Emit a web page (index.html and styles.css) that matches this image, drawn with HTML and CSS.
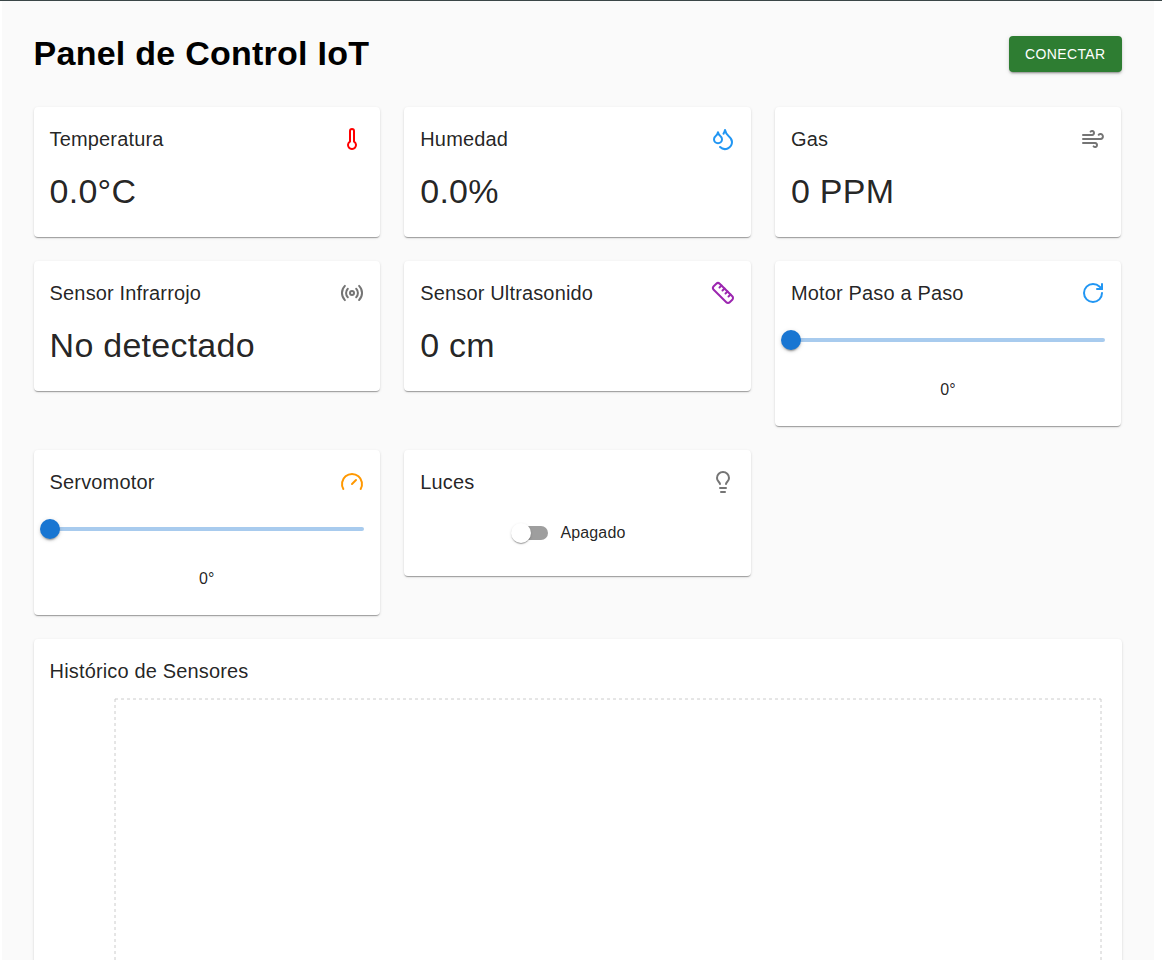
FILE: index.html
```html
<!DOCTYPE html>
<html lang="es">
<head>
<meta charset="utf-8">
<title>Panel de Control IoT</title>
<link rel="stylesheet" href="styles.css">
</head>
<body>
<main class="page">
  <header class="topbar">
    <h1 class="page-title">Panel de Control IoT</h1>
    <button class="connect" type="button">Conectar</button>
  </header>

  <section class="grid">
    <article class="card">
      <div class="card-head"><h2 class="card-title">Temperatura</h2>
        <svg class="icon icon-red" viewBox="0 0 24 24"><path d="M14 4v10.54a4 4 0 1 1-4 0V4a2 2 0 0 1 4 0Z"/></svg></div>
      <p class="value">0.0°C</p>
    </article>
    <article class="card">
      <div class="card-head"><h2 class="card-title">Humedad</h2>
        <svg class="icon icon-blue" viewBox="0 0 24 24"><path d="M7 16.3c2.2 0 4-1.83 4-4.05 0-1.16-.57-2.26-1.71-3.19S7.29 6.75 7 5.3c-.29 1.45-1.14 2.84-2.29 3.76S3 11.1 3 12.25c0 2.22 1.8 4.05 4 4.05z"/><path d="M12.56 6.6A10.97 10.97 0 0 0 14 3.02c.5 2.5 2 4.9 4 6.5s3 3.5 3 5.5a6.98 6.98 0 0 1-11.91 4.97"/></svg></div>
      <p class="value">0.0%</p>
    </article>
    <article class="card">
      <div class="card-head"><h2 class="card-title">Gas</h2>
        <svg class="icon icon-grey" viewBox="0 0 24 24"><path d="M17.7 7.7a2.5 2.5 0 1 1 1.8 4.3H2"/><path d="M9.6 4.6A2 2 0 1 1 11 8H2"/><path d="M12.6 19.4A2 2 0 1 0 14 16H2"/></svg></div>
      <p class="value">0 PPM</p>
    </article>

    <article class="card">
      <div class="card-head"><h2 class="card-title">Sensor Infrarrojo</h2>
        <svg class="icon icon-grey" viewBox="0 0 24 24"><path d="M4.9 19.1C1 15.2 1 8.8 4.9 4.9"/><path d="M7.8 16.2c-2.3-2.3-2.3-6.1 0-8.5"/><circle cx="12" cy="12" r="2"/><path d="M16.2 7.8c2.3 2.3 2.3 6.1 0 8.5"/><path d="M19.1 4.9C23 8.8 23 15.1 19.1 19"/></svg></div>
      <p class="value">No detectado</p>
    </article>
    <article class="card">
      <div class="card-head"><h2 class="card-title">Sensor Ultrasonido</h2>
        <svg class="icon icon-purple" viewBox="0 0 24 24"><path d="M21.3 15.3a2.4 2.4 0 0 1 0 3.4l-2.6 2.6a2.4 2.4 0 0 1-3.4 0L2.7 8.7a2.41 2.41 0 0 1 0-3.4l2.6-2.6a2.41 2.41 0 0 1 3.4 0Z"/><path d="m14.5 12.5 2-2"/><path d="m11.5 9.5 2-2"/><path d="m8.5 6.5 2-2"/><path d="m17.5 15.5 2-2"/></svg></div>
      <p class="value">0 cm</p>
    </article>
    <article class="card">
      <div class="card-head"><h2 class="card-title">Motor Paso a Paso</h2>
        <svg class="icon icon-blue" viewBox="0 0 24 24"><path d="M21 12a9 9 0 1 1-9-9c2.52 0 4.93 1 6.74 2.74L21 8"/><path d="M21 3v5h-5"/></svg></div>
      <div class="slider"><span class="slider-track"></span><span class="slider-thumb"></span></div>
      <p class="reading">0°</p>
    </article>

    <article class="card">
      <div class="card-head"><h2 class="card-title">Servomotor</h2>
        <svg class="icon icon-orange" viewBox="0 0 24 24"><path d="m12 14 4-4"/><path d="M3.34 19a10 10 0 1 1 17.32 0"/></svg></div>
      <div class="slider"><span class="slider-track"></span><span class="slider-thumb"></span></div>
      <p class="reading">0°</p>
    </article>
    <article class="card">
      <div class="card-head"><h2 class="card-title">Luces</h2>
        <svg class="icon icon-grey" viewBox="0 0 24 24"><path d="M15 14c.2-1 .7-1.7 1.5-2.5 1-.9 1.5-2.2 1.5-3.5A6 6 0 0 0 6 8c0 1 .2 2.2 1.5 3.5.7.7 1.3 1.5 1.5 2.5"/><path d="M9 18h6"/><path d="M10 22h4"/></svg></div>
      <div class="toggle-row">
        <label class="toggle"><span class="switch"><span class="switch-track"></span><span class="switch-thumb"></span></span><span class="toggle-label">Apagado</span></label>
      </div>
    </article>
  </section>

  <section class="card history">
    <h2 class="card-title history-title">Histórico de Sensores</h2>
    <svg class="chart" viewBox="0 0 1056 400" width="1056" height="400">
      <g class="chart-grid">
        <line x1="65" y1="5" x2="1051" y2="5"/>
        <line x1="65" y1="5" x2="65" y2="365"/>
        <line x1="1051" y1="5" x2="1051" y2="365"/>
        <line x1="65" y1="365" x2="1051" y2="365"/>
      </g>
    </svg>
  </section>
</main>
</body>
</html>
```
FILE: styles.css
```css
* { box-sizing: border-box; }

html, body {
  margin: 0;
  background: #fff;
}

body {
  height: 960px;
  overflow: hidden;
  border-top: 1px solid #3a4647;
  font-family: "Liberation Sans", Arial, sans-serif;
  color: rgba(0, 0, 0, .87);
}

.page {
  margin: 0 8.4px 0 1.6px;
  padding: 32px;
  background: #fafafa;
}

.topbar {
  display: flex;
  align-items: center;
  justify-content: space-between;
  margin-bottom: 32px;
}

.page-title {
  margin: 0;
  font-size: 34px;
  line-height: 41.99px;
  font-weight: 700;
  letter-spacing: .25px;
  color: #000;
}

.connect {
  height: 36px;
  padding: 6px 16px;
  border: 0;
  border-radius: 4px;
  background: #2e7d32;
  color: #fff;
  font: 400 14px/24.5px "Liberation Sans", Arial, sans-serif;
  letter-spacing: .4px;
  text-transform: uppercase;
  box-shadow: 0 3px 1px -2px rgba(0,0,0,.2), 0 2px 2px 0 rgba(0,0,0,.14), 0 1px 5px 0 rgba(0,0,0,.12);
}

.grid {
  display: grid;
  grid-template-columns: repeat(3, 1fr);
  gap: 24px;
  align-items: start;
  margin-bottom: 24px;
}

.grid .card {
  margin-right: .3px;
}

.card {
  padding: 16px 16px 24px;
  border-radius: 4px;
  background: #fff;
  box-shadow: 0 2px 1px -1px rgba(0,0,0,.2), 0 1px 1px 0 rgba(0,0,0,.14), 0 1px 3px 0 rgba(0,0,0,.12);
}

.card-head {
  display: flex;
  align-items: center;
  justify-content: space-between;
  margin-bottom: 16px;
}

.card-title {
  margin: 0;
  font-size: 20px;
  line-height: 32px;
  font-weight: 400;
  letter-spacing: .15px;
}

.icon {
  width: 24px;
  height: 24px;
  fill: none;
  stroke: currentColor;
  stroke-width: 2;
  stroke-linecap: round;
  stroke-linejoin: round;
}

.icon-red { color: #f00; }
.icon-blue { color: #2196f3; }
.icon-grey { color: #757575; }
.icon-purple { color: #9c27b0; }
.icon-orange { color: #ff9800; }

.value {
  margin: 0;
  font-size: 34px;
  line-height: 41.99px;
  letter-spacing: .25px;
}

.slider {
  position: relative;
  height: 30px;
  margin-bottom: 23px;
}

.slider-track {
  display: block;
  position: absolute;
  top: 13px;
  left: 0;
  right: 0;
  height: 4px;
  border-radius: 2px;
  background: #1976d2;
  opacity: .38;
}

.slider-thumb {
  position: absolute;
  top: 5px;
  left: -10px;
  width: 20px;
  height: 20px;
  border-radius: 50%;
  background: #1976d2;
  box-shadow: 0 3px 1px -2px rgba(0,0,0,.2), 0 2px 2px 0 rgba(0,0,0,.14), 0 1px 5px 0 rgba(0,0,0,.12);
}

.reading {
  margin: 0;
  font-size: 16px;
  line-height: 24px;
  letter-spacing: .15px;
  text-align: center;
}

.toggle-row {
  display: flex;
  justify-content: center;
}

.toggle {
  display: inline-flex;
  align-items: center;
  margin-left: -11px;
  margin-right: 16px;
}

.switch {
  position: relative;
  display: block;
  width: 58px;
  height: 38px;
}

.switch-track {
  position: absolute;
  top: 12px;
  left: 12px;
  width: 34px;
  height: 14px;
  border-radius: 7px;
  background: #9e9e9e;
}

.switch-thumb {
  position: absolute;
  top: 9px;
  left: 9px;
  width: 20px;
  height: 20px;
  border-radius: 50%;
  background: #fff;
  box-shadow: 0 2px 1px -1px rgba(0,0,0,.2), 0 1px 1px 0 rgba(0,0,0,.14), 0 1px 3px 0 rgba(0,0,0,.12);
}

.toggle-label {
  font-size: 16px;
  line-height: 24px;
  letter-spacing: .15px;
}

.history-title {
  margin-bottom: 7px;
}

.chart {
  display: block;
}

.chart-grid line {
  stroke: #ccc;
  stroke-dasharray: 3 3;
}
```
